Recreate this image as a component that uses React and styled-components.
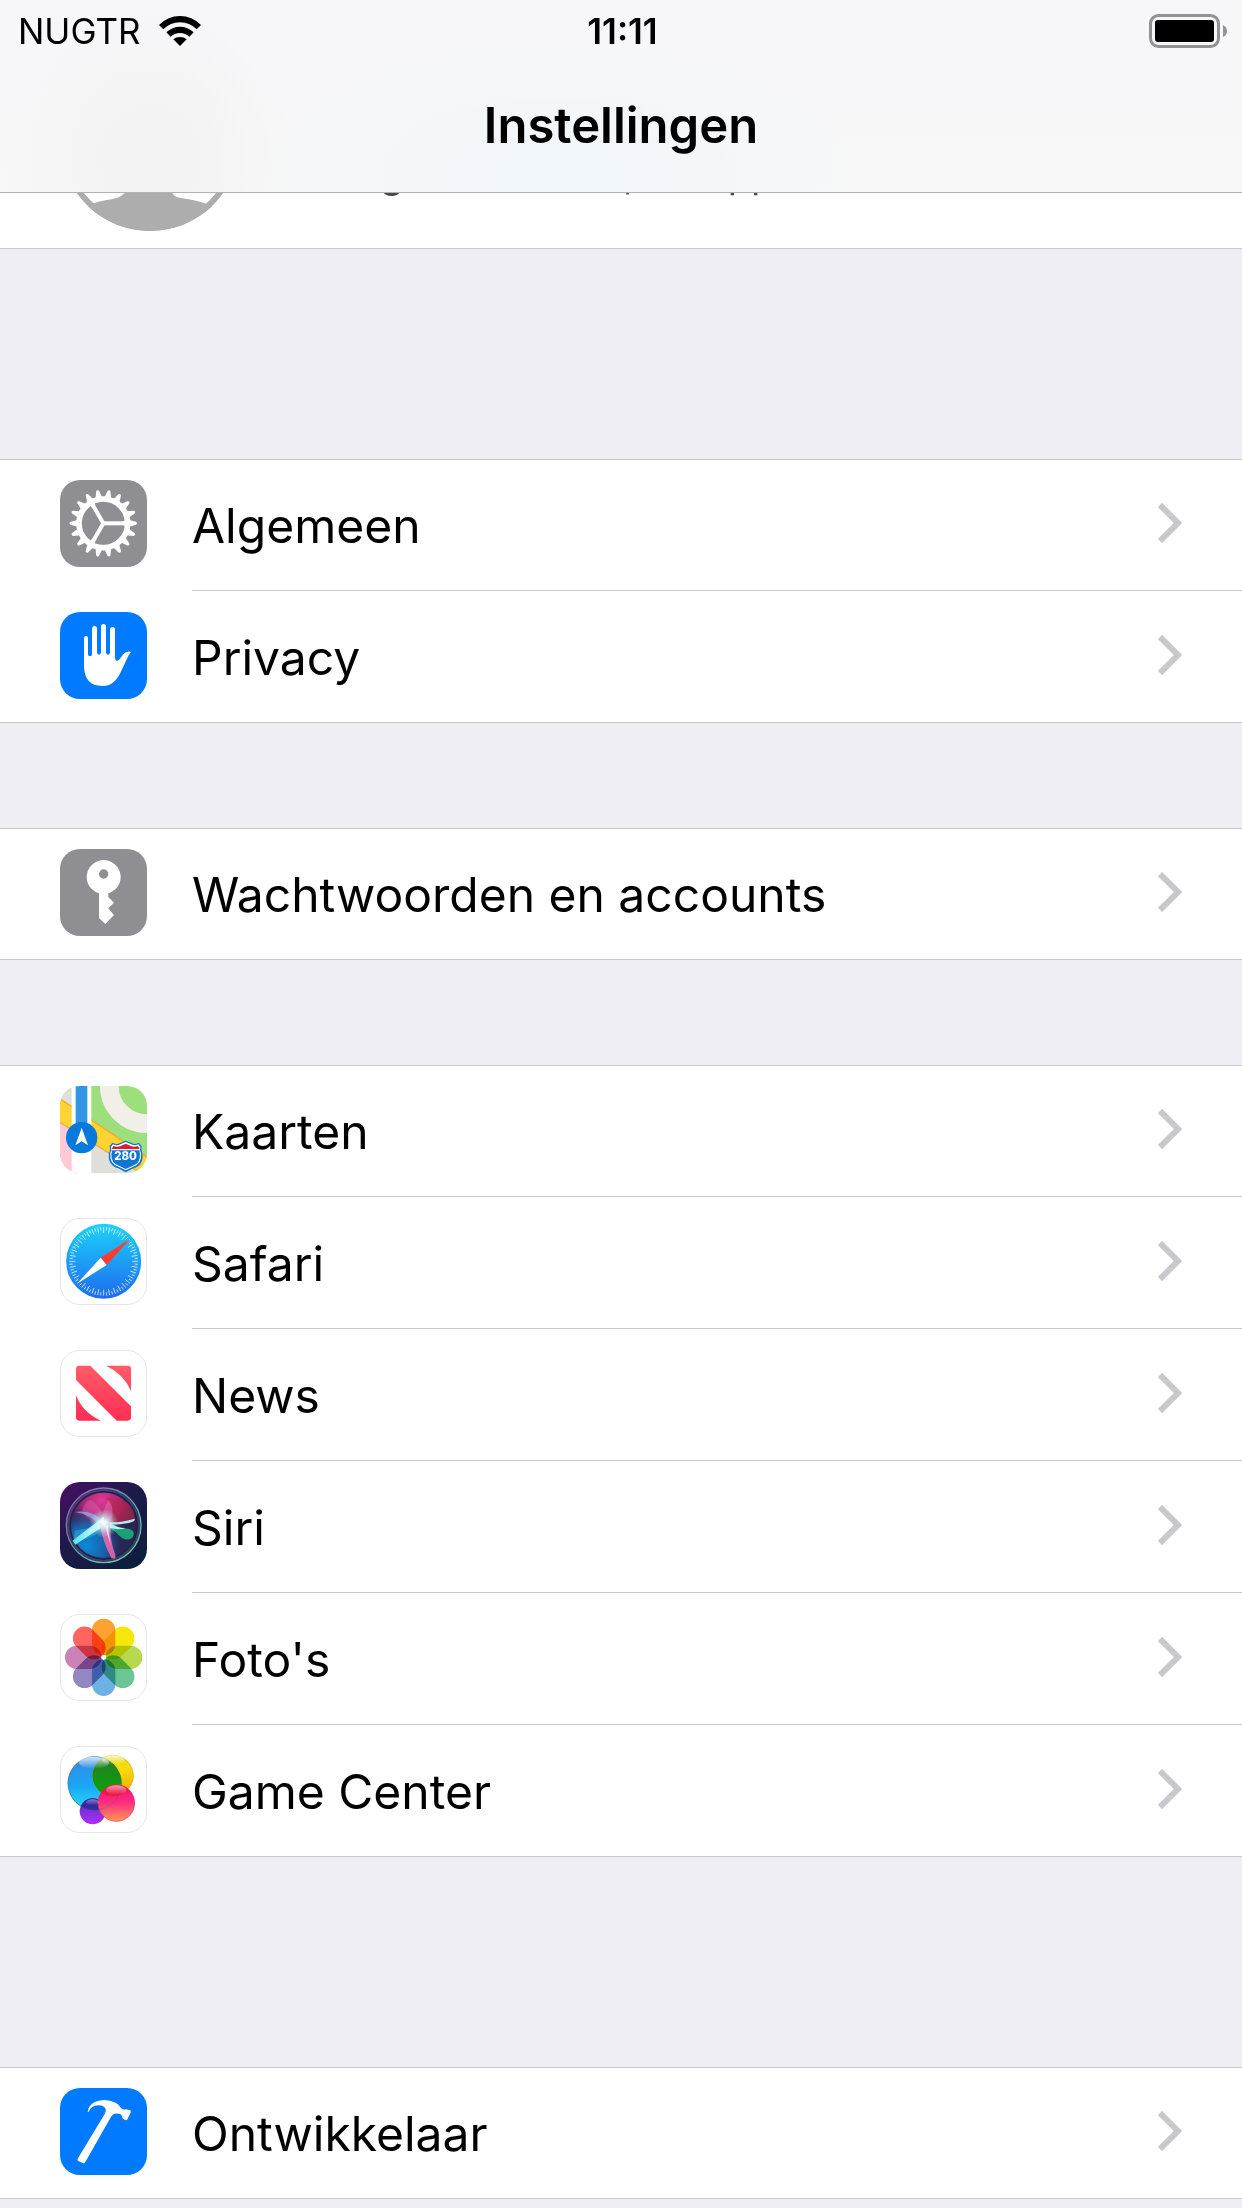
import React from "react";
import styled, { createGlobalStyle } from "styled-components";

const GlobalStyle = createGlobalStyle`
  * { box-sizing: border-box; }
  body {
    margin: 0;
    background: #efeef4;
    color: #000;
    font-family: Inter, "Noto Sans", "Liberation Sans", sans-serif;
  }
`;

const Header = styled.header`
  position: sticky;
  top: 0;
  z-index: 1;
  height: 192px;
  box-shadow: 0 1px 0 #b2b2b2;
  background:
    radial-gradient(ellipse 150px 160px at 150px 160px, #f3f3f3 30%, transparent),
    radial-gradient(ellipse 300px 130px at 45% 90%, #f1f6fa 20%, transparent),
    linear-gradient(#f7f7fa, #f8f8f8);
`;

const StatusBar = styled.div`
  display: grid;
  grid-template-columns: 1fr auto 1fr;
  align-items: center;
  height: 62px;
  padding: 0 15px 0 18px;
  font-size: 35px;
  line-height: 42px;
`;

const Carrier = styled.div`
  display: flex;
  align-items: center;
  gap: 18px;
`;

const Time = styled.time`
  font-weight: 600;
`;

const Battery = styled.svg`
  justify-self: end;
`;

const Title = styled.h1`
  margin: 0;
  padding-top: 34px;
  font-size: 49px;
  font-weight: 600;
  line-height: 60px;
  text-align: center;
`;

const Profile = styled.section`
  display: flex;
  align-items: center;
  gap: 44px;
  height: 264px;
  margin-top: -207px;
  padding: 48px 60px 0;
  background: #fff;
  border-bottom: 1px solid #c8c7cc;
`;

const Subtitle = styled.p`
  margin: 66px 0 0;
  color: #4a4a4a;
  font-size: 38px;
  line-height: 40px;
`;

const Groups = styled.main`
  padding-bottom: 9px;
`;

const RowLink = styled.a`
  display: flex;
  gap: 45px;
  height: 132px;
  padding-left: 60px;
  color: inherit;
  text-decoration: none;
`;

const AppIcon = styled.svg`
  flex: none;
  width: 87px;
  height: 87px;
  margin-top: 21px;
`;

const RowBody = styled.span`
  display: flex;
  flex: 1;
  align-items: center;
  justify-content: space-between;
  padding: 0 60px 3px 0;
  border-bottom: 1px solid #c8c7cc;
`;

const Group = styled.ul`
  margin: ${(p) => (p.$spaced ? 210 : 105)}px 0 0;
  padding: 0;
  list-style: none;
  background: #fff;
  box-shadow: inset 0 1px #c8c7cc, inset 0 -1px #c8c7cc;

  li:last-child ${RowBody} {
    border-bottom-color: transparent;
  }
`;

const Label = styled.span`
  padding-top: 6px;
  font-size: 48px;
  line-height: 60px;
`;

const Chevron = styled.svg`
  flex: none;
  width: 24px;
  height: 40px;
`;

const range = (n) => Array.from({ length: n }, (_, i) => i);

const Tile = ({ fill }) => <rect width="261" height="261" rx="60" fill={fill} />;
const WhiteTile = () => (
  <rect x="1.5" y="1.5" width="258" height="258" rx="58" fill="#fff" stroke="#e5e5e5" strokeWidth="3" />
);

const Gear = () => (
  <>
    <Tile fill="#8e8e93" />
    <g fill="#fff">
      {range(18).map((i) => (
        <path key={i} d="M208 120l20 5.500q3 1 3 4.500t-3 4.500l-20 5.500z" transform={`rotate(${i * 20} 130 130)`} />
      ))}
    </g>
    <circle cx="130" cy="130" r="73" fill="none" stroke="#fff" strokeWidth="17" />
    {[0, 120, 240].map((a) => (
      <path key={a} d="M130 130H196" stroke="#fff" strokeWidth="12" transform={`rotate(${a} 130 130)`} />
    ))}
    {[0, 120, 240].map((a) => (
      <path key={a} d="M196 121q-4 3-8 3v12q4 0 8 3z" fill="#fff" transform={`rotate(${a} 130 130)`} />
    ))}
  </>
);

const Hand = () => (
  <>
    <Tile fill="#007aff" />
    <path
      fill="#fff"
      d="M72 78q0-6 6-6t6 6v48q0 7 6 7t6-7V50q0-8 7.500-8t7.500 8v71q0 7 6 7t6-7V43.500q0-7.500 7.500-7.500t7.500 7.500V121q0 7 6 7t6-7V52.500q0-7.500 7.500-7.500t7.500 7.500V134q0 11 6 12 5 1 12-10 10-16 20-17 6-2 10 1-6 7-11 18l-18 38q-19 46-57 46-55 0-55-62z"
    />
  </>
);

const Key = () => (
  <>
    <Tile fill="#8e8e93" />
    <path
      fill="#fff"
      fillRule="evenodd"
      d="M117 133a51 51 0 1 1 28 0v11l17 17-17 17 17 20-26 27-19-18zM131 61a14 14 0 1 0 0 28 14 14 0 0 0 0-28z"
    />
  </>
);

const Maps = () => (
  <>
    <clipPath id="mapsTile"><rect width="261" height="261" rx="60" /></clipPath>
    <g clipPath="url(#mapsTile)">
      <rect width="261" height="261" fill="#9ddf7c" />
      <circle cx="261" cy="0" r="113" fill="none" stroke="#f2efe9" strokeWidth="56" />
      <path d="M0 0H40V70L0 40z" fill="#dfded8" />
      <path d="M0 100L40 128V261H0z" fill="#ffc9d8" />
      <path d="M90 160L240 261H90z" fill="#dfded8" />
      <path d="M-4 36L265 216V276L-4 106z" fill="#ffd432" stroke="#f8a82b" strokeWidth="4" />
      <rect x="35" width="59" height="261" fill="#fff" />
      <rect x="47" width="35" height="130" fill="#3395e5" />
      <circle cx="65" cy="155" r="47" fill="#0579dc" />
      <path d="M65 125L84 178 65 166 46 178z" fill="#fff" />
      <path d="M158 170q12 7 22 1l17-7 18 7q10 6 21-1l9 11q-4 9 2 20 5 38-27 46l-23 12-22-12q-33-9-28-46 6-11 1-20z" fill="#0873d2" />
      <path d="M159 175q12 6 22 0l16-7 17 7q10 6 21 0l6 7q-3 10 2 20 4 33-25 41l-21 10-20-10q-30-9-26-41 5-11 2-20z" fill="#fff" />
      <path d="M160 180q12 5 22 0l15-7 16 7q10 5 21 0l5 9H155z" fill="#dc1e28" />
      <path d="M155 193H239q-1 6 1 11 2 28-23 36l-20 9-19-9q-26-8-24-36 3-5 1-11z" fill="#1476d3" />
      <text x="197" y="222" fill="#fff" fontFamily="Inter, sans-serif" fontSize="34" fontWeight="800" textAnchor="middle">280</text>
    </g>
  </>
);

const Safari = () => (
  <>
    <linearGradient id="safariSky" x2="0" y2="1">
      <stop stopColor="#1bd2fc" />
      <stop offset="1" stopColor="#1e6bef" />
    </linearGradient>
    <WhiteTile />
    <circle cx="131" cy="130" r="112.500" fill="url(#safariSky)" />
    {range(72).map((i) => (
      <path key={i} d={i % 2 ? "M131 27v10" : "M131 27v18"} stroke="#fff" strokeOpacity=".85" strokeWidth="2.500" transform={`rotate(${i * 5} 131 130)`} />
    ))}
    <path d="M211 62L122 119 140 141z" fill="#ff3b30" />
    <path d="M51 197L122 119 140 141z" fill="#fff" />
  </>
);

const News = () => (
  <>
    <linearGradient id="newsRed" gradientUnits="userSpaceOnUse" x1="0" x2="0" y1="47" y2="212">
      <stop stopColor="#ff5c68" />
      <stop offset="1" stopColor="#ff2d55" />
    </linearGradient>
    <WhiteTile />
    <g fill="url(#newsRed)">
      <path d="M58 47H91L213 169V202q0 10-10 10H170L48 90V57q0-10 10-10z" />
      <path d="M138 47H203q10 0 10 10V123Q192 72 138 47z" />
      <path d="M48 136Q69 189 123 212H58q-10 0-10-10z" />
    </g>
  </>
);

const Siri = () => (
  <>
    <linearGradient id="siriBack" x2=".8" y2="1">
      <stop stopColor="#4c0d66" />
      <stop offset=".45" stopColor="#20194a" />
      <stop offset="1" stopColor="#0b1f3c" />
    </linearGradient>
    <linearGradient id="siriRim" x2="1" y2="1">
      <stop stopColor="#8f62b0" />
      <stop offset=".5" stopColor="#5fa0a8" />
      <stop offset="1" stopColor="#83d6bb" />
    </linearGradient>
    <radialGradient id="siriPink" gradientUnits="userSpaceOnUse" cx="125" cy="55" r="105">
      <stop stopColor="#e23a93" />
      <stop offset=".55" stopColor="#bb2b7d" stopOpacity=".8" />
      <stop offset="1" stopColor="#7a2170" stopOpacity="0" />
    </radialGradient>
    <radialGradient id="siriBlue" gradientUnits="userSpaceOnUse" cx="80" cy="190" r="105">
      <stop stopColor="#0b8bdc" />
      <stop offset=".6" stopColor="#186bb8" stopOpacity=".8" />
      <stop offset="1" stopColor="#184a80" stopOpacity="0" />
    </radialGradient>
    <radialGradient id="siriGlow">
      <stop stopColor="#fff" />
      <stop offset=".35" stopColor="#dffcff" stopOpacity=".75" />
      <stop offset="1" stopColor="#8de8e8" stopOpacity="0" />
    </radialGradient>
    <linearGradient id="siriRay" gradientUnits="userSpaceOnUse" x1="40" y1="180" x2="225" y2="160">
      <stop stopColor="#5be0ef" />
      <stop offset=".5" stopColor="#e9ffff" />
      <stop offset="1" stopColor="#16a078" />
    </linearGradient>
    <filter id="siriSoft"><feGaussianBlur stdDeviation="2" /></filter>
    <Tile fill="url(#siriBack)" />
    <circle cx="131" cy="130" r="100" fill="#2b2554" />
    <circle cx="131" cy="130" r="98" fill="url(#siriPink)" />
    <circle cx="131" cy="130" r="98" fill="url(#siriBlue)" />
    <g filter="url(#siriSoft)">
      <path d="M66 86Q82 38 104 62q30 30 40 78Q88 124 66 86z" fill="#f06bb6" opacity=".35" />
      <path d="M118 130Q138 58 148 52q15 16 7 82z" fill="#f36cb2" opacity=".5" />
      <path d="M138 48q86-2 86 68-34 12-78 8 28-40-8-76z" fill="#b82446" opacity=".65" />
      <path d="M44 90q56-10 96 38l-12 10Q94 96 44 90z" fill="#8fb8ef" opacity=".7" />
      <path d="M44 146q50-10 86-16l-24 30Q80 174 40 178z" fill="#28b8dd" opacity=".5" />
      <path d="M134 120q44 4 90-10 6 16-80 18z" fill="#b8fff4" opacity=".9" />
      <path d="M38 176Q92 134 130 106l8 22Q84 162 46 188z" fill="url(#siriRay)" />
      <path d="M134 114q38 28 74 26 22 8 8 28-20 12-40-8-16-20-46-30z" fill="#18b47e" opacity=".85" />
      <path d="M134 114q38 26 64 24-30 10-66-6z" fill="#adffe5" />
      <path d="M118 124q12 60 36 104 16 6 12-10-16-36-16-98z" fill="#f267aa" opacity=".85" />
      <path d="M144 130q4 60 18 82-14-30-26-78z" fill="#ffd8ef" />
    </g>
    <circle cx="132" cy="124" r="44" fill="url(#siriGlow)" />
    <circle cx="131" cy="130" r="112" fill="none" stroke="url(#siriRim)" strokeWidth="4" />
    <circle cx="131" cy="130" r="106" fill="none" stroke="#9bb9cf" strokeOpacity=".25" strokeWidth="6" />
  </>
);

const PETALS = ["#fba232", "#f7e60a", "#b8d84e", "#6cc594", "#6eb1e5", "#9287c2", "#cb83b5", "#ff6560"];

const Photos = () => (
  <>
    <WhiteTile />
    <g style={{ isolation: "isolate" }}>
      {PETALS.map((c, i) => (
        <rect key={c} x="96" y="14" width="70" height="110" rx="35" fill={c} style={{ mixBlendMode: "multiply" }} transform={`rotate(${i * 45} 131 130)`} />
      ))}
    </g>
    <circle cx="131" cy="130" r="7" fill="#fff" />
  </>
);

const GameCenter = () => (
  <>
    <linearGradient id="gcBlue" x2="0" y2="1"><stop stopColor="#3b88dc" /><stop offset=".55" stopColor="#18a7f8" /><stop offset="1" stopColor="#29e0f2" /></linearGradient>
    <linearGradient id="gcYellow" x2=".3" y2="1"><stop stopColor="#d9d400" /><stop offset=".5" stopColor="#fbdc0c" /><stop offset="1" stopColor="#f0b400" /></linearGradient>
    <linearGradient id="gcPink" x2="0" y2="1"><stop stopColor="#f00a78" /><stop offset=".5" stopColor="#ff2e82" /><stop offset="1" stopColor="#ff9a52" /></linearGradient>
    <linearGradient id="gcPurple" x2="0" y2="1"><stop stopColor="#5034b4" /><stop offset="1" stopColor="#b02bff" /></linearGradient>
    <linearGradient id="gcGreen" x2="0" y2="1"><stop stopColor="#287b27" /><stop offset="1" stopColor="#07a508" /></linearGradient>
    <linearGradient id="gcShine" x2="0" y2="1"><stop stopColor="#fff" stopOpacity=".8" /><stop offset="1" stopColor="#fff" stopOpacity="0" /></linearGradient>
    <clipPath id="gcBlueClip"><circle cx="104" cy="112" r="81" /></clipPath>
    <clipPath id="gcYellowClip"><circle cx="159" cy="89" r="62" /></clipPath>
    <WhiteTile />
    <circle cx="104" cy="112" r="80" fill="url(#gcBlue)" stroke="#2b86cd" strokeWidth="2" />
    <circle cx="159" cy="89" r="61" fill="url(#gcYellow)" stroke="#c6b21d" strokeWidth="2" />
    <circle cx="159" cy="89" r="62" fill="url(#gcGreen)" clipPath="url(#gcBlueClip)" />
    <circle cx="98" cy="196" r="39" fill="url(#gcPurple)" />
    <circle cx="98" cy="196" r="39" fill="#3528a4" clipPath="url(#gcBlueClip)" />
    <circle cx="169" cy="171" r="55" fill="url(#gcPink)" stroke="#db314f" strokeWidth="2" />
    <circle cx="169" cy="171" r="55" fill="#e9171f" opacity=".6" clipPath="url(#gcYellowClip)" />
    <circle cx="104" cy="112" r="80" fill="none" stroke="#365d63" strokeOpacity=".5" strokeWidth="2" />
    <ellipse cx="102" cy="50" rx="45" ry="18" fill="url(#gcShine)" />
    <ellipse cx="159" cy="42" rx="34" ry="14" fill="url(#gcShine)" />
    <ellipse cx="169" cy="132" rx="31" ry="14" fill="url(#gcShine)" opacity=".7" />
    <ellipse cx="98" cy="169" rx="20" ry="9" fill="url(#gcShine)" opacity=".5" />
  </>
);

const Hammer = () => (
  <>
    <Tile fill="#007aff" />
    <path
      fill="#fff"
      d="M83 72q3-22 23-31 31-12 62 4 10 5 13 13 8 9 16 6l15 3 0 7-11 22q-7 2-14-6-1-11-8-12-13-3-19 1-5 3-9 11L76 222q-3 5-8 3l-13-6q-4-2-2-7l81-134q5-9 3-15-5-10-20-11-22-1-31 19z"
    />
  </>
);

const GROUPS = [
  { spaced: true, rows: [["Algemeen", Gear], ["Privacy", Hand]] },
  { rows: [["Wachtwoorden en accounts", Key]] },
  {
    rows: [
      ["Kaarten", Maps],
      ["Safari", Safari],
      ["News", News],
      ["Siri", Siri],
      ["Foto's", Photos],
      ["Game Center", GameCenter],
    ],
  },
  { spaced: true, rows: [["Ontwikkelaar", Hammer]] },
];

function Row({ label, Art }) {
  return (
    <li>
      <RowLink href="#">
        <AppIcon viewBox="0 0 261 261" aria-hidden="true"><Art /></AppIcon>
        <RowBody>
          <Label>{label}</Label>
          <Chevron viewBox="0 0 24 40" aria-hidden="true">
            <path d="M2 2L20 20 2 38" fill="none" stroke="#c7c7cc" strokeWidth="6" />
          </Chevron>
        </RowBody>
      </RowLink>
    </li>
  );
}

export default function App() {
  return (
    <>
      <GlobalStyle />
      <Header>
        <StatusBar>
          <Carrier>
            NUGTR
            <svg width="42" height="30" viewBox="0 0 126 90" aria-label="Wifi">
              <path d="M0 27Q27 0 63 0t63 27L113 40Q92 19 63 19T13 40z" />
              <path d="M22 49Q39 32 63 32t41 17L91 62Q79 51 63 51T35 62z" />
              <path d="M43 70q8-7 20-7t20 7L63 90z" />
            </svg>
          </Carrier>
          <Time>11:11</Time>
          <Battery width="78" height="34" viewBox="0 0 78 34" aria-label="Batterij">
            <rect x="1.500" y="1.500" width="68" height="31" rx="8" fill="none" stroke="#929294" strokeWidth="3" />
            <rect x="6" y="6" width="59" height="22" rx="3" />
            <path d="M74 11q4 2 4 6t-4 6z" fill="#929294" />
          </Battery>
        </StatusBar>
        <Title>Instellingen</Title>
      </Header>
      <Profile>
        <svg width="180" height="180" viewBox="0 0 180 180" aria-hidden="true">
          <clipPath id="avatar"><circle cx="90" cy="90" r="90" /></clipPath>
          <g clipPath="url(#avatar)">
            <circle cx="90" cy="90" r="87" fill="#fff" stroke="#adadad" strokeWidth="6" />
            <circle cx="90" cy="66" r="34" fill="#adadad" />
            <path d="M66 86H112V141q1 5 9 6 15 2 26 6l6 2V180H27V155q10-5 26-7 11-3 13-8z" fill="#adadad" />
          </g>
        </svg>
        <Subtitle>Configureer iCloud, de App Store en meer.</Subtitle>
      </Profile>
      <Groups>
        {GROUPS.map(({ spaced, rows }) => (
          <Group key={rows[0][0]} $spaced={spaced}>
            {rows.map(([label, Art]) => <Row key={label} label={label} Art={Art} />)}
          </Group>
        ))}
      </Groups>
    </>
  );
}
